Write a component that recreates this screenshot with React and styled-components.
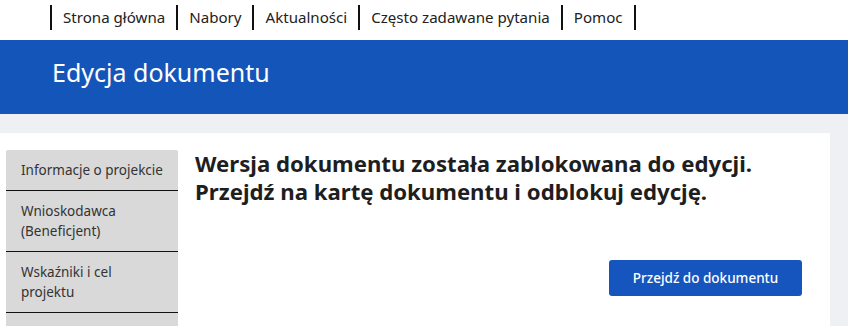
import React from "react";
import styled, { createGlobalStyle } from "styled-components";

const Global = createGlobalStyle`
  body {
    margin: 0;
    background: #eef0f4;
    font-family: "Noto Sans", "Open Sans", sans-serif;
    color: #222;
  }
`;

const TopNav = styled.nav`
  background: #fff;
  height: 40px;
  padding-left: 50px;
  display: flex;
  align-items: flex-start;
  padding-top: 5px;
  box-sizing: border-box;
`;

const NavItem = styled.a`
  display: block;
  border-left: 2px solid #111;
  padding: 0 11px;
  height: 25px;
  line-height: 24px;
  font-size: 15.1px;
  color: #222;
  text-decoration: none;
  &:last-child {
    border-right: 2px solid #111;
  }
`;

const Banner = styled.header`
  background: #1455b9;
  height: 74px;
  box-sizing: border-box;
  padding: 15px 0 0 52px;
`;

const Title = styled.h1`
  margin: 0;
  font-size: 25px;
  line-height: 34px;
  font-weight: 400;
  color: #fff;
`;

const Main = styled.main`
  padding: 19px 18px 0 0;
`;

const Card = styled.section`
  background: #fff;
  display: flex;
  gap: 17px;
  padding: 17px 28px 0 6px;
  min-height: 200px;
`;

const Sidebar = styled.ul`
  list-style: none;
  margin: 0;
  padding: 0;
  width: 172px;
  flex-shrink: 0;
  background: #d9d9d9;
  border-radius: 2px 2px 0 0;
`;

const SideItem = styled.li`
  padding: 10px 14px 9px 15px;
  font-size: 13.5px;
  line-height: 20.5px;
  color: #333;
  border-bottom: ${(p) => (p.last ? "none" : "1px solid #111")};
  min-height: ${(p) => (p.tall ? "41px" : "20.5px")};
`;

const Content = styled.div`
  flex: 1;
  display: flex;
  flex-direction: column;
`;

const Heading = styled.h2`
  margin: 0;
  font-size: 22.2px;
  line-height: 28px;
  font-weight: 700;
  color: #1e1e1e;
`;

const Actions = styled.div`
  display: flex;
  justify-content: flex-end;
  margin-top: 54px;
`;

const Button = styled.button`
  width: 193px;
  height: 36px;
  background: #1655be;
  border: none;
  border-radius: 3px;
  color: #fff;
  font-family: inherit;
  font-size: 13.5px;
  font-weight: 500;
`;

export default function App() {
  const nav = ["Strona główna", "Nabory", "Aktualności", "Często zadawane pytania", "Pomoc"];
  return (
    <>
      <Global />
      <TopNav>
        {nav.map((n) => (
          <NavItem key={n} href="#">
            {n}
          </NavItem>
        ))}
      </TopNav>
      <Banner>
        <Title>Edycja dokumentu</Title>
      </Banner>
      <Main>
        <Card>
          <Sidebar>
            <SideItem>Informacje o projekcie</SideItem>
            <SideItem tall>Wnioskodawca (Beneficjent)</SideItem>
            <SideItem tall>Wskaźniki i cel projektu</SideItem>
            <SideItem last />
          </Sidebar>
          <Content>
            <Heading>
              Wersja dokumentu została zablokowana do edycji.
              <br />
              Przejdź na kartę dokumentu i odblokuj edycję.
            </Heading>
            <Actions>
              <Button>Przejdź do dokumentu</Button>
            </Actions>
          </Content>
        </Card>
      </Main>
    </>
  );
}
